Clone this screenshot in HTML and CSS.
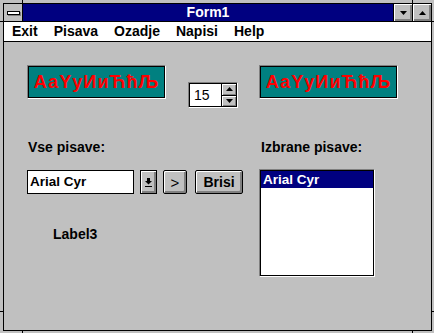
FILE: index.html
```html
<!DOCTYPE html>
<html>
<head>
<meta charset="utf-8">
<link rel="stylesheet" href="styles.css">
</head>
<body>
<div class="window">
  <div class="win">
    <div class="titlebar">
      <div class="sysbox"><span class="sysbar"></span></div>
      <div class="title">Form1</div>
      <div class="tbtn"><svg width="7" height="4" viewBox="0 0 7 4"><polygon points="0,0 7,0 3.5,4" fill="#000"/></svg></div>
      <div class="tbtn"><svg width="7" height="4" viewBox="0 0 7 4"><polygon points="0,4 7,4 3.5,0" fill="#000"/></svg></div>
    </div>
    <div class="menubar">
      <span class="mitem">Exit</span>
      <span class="mitem">Pisava</span>
      <span class="mitem">Ozadje</span>
      <span class="mitem">Napisi</span>
      <span class="mitem">Help</span>
    </div>
    <div class="client">
      <div class="col-left">
        <div class="row1">
          <div class="panel">АаYyИиЋћЉ</div>
          <div class="spin">
            <div class="spin-in">
              <div class="spin-edit">15</div>
              <div class="spin-btns">
                <div class="sbtn"><svg width="7" height="4" viewBox="0 0 7 4"><polygon points="0,4 7,4 3.5,0" fill="#000"/></svg></div>
                <div class="sbtn sbtn-low"><svg width="7" height="4" viewBox="0 0 7 4"><polygon points="0,0 7,0 3.5,4" fill="#000"/></svg></div>
              </div>
            </div>
          </div>
        </div>
        <div class="label lbl-left">Vse pisave:</div>
        <div class="combo-row">
          <div class="combo-edit">Arial Cyr</div>
          <div class="btn drop"><svg width="7" height="9" viewBox="0 0 7 9"><rect x="2" y="0" width="3" height="3" fill="#000"/><polygon points="0,3 7,3 3.5,6.5" fill="#000"/><rect x="0" y="8" width="7" height="1" fill="#000"/></svg></div>
          <div class="btn arrow">&gt;</div>
          <div class="btn brisi">Brisi</div>
        </div>
        <div class="label label3">Label3</div>
      </div>
      <div class="col-right">
        <div class="panel">АаYyИиЋћЉ</div>
        <div class="label lbl-right">Izbrane pisave:</div>
        <div class="listbox">
          <div class="litem sel">Arial Cyr</div>
        </div>
      </div>
    </div>
  </div>
  <span class="tick tv t-top1"></span>
  <span class="tick tv t-top2"></span>
  <span class="tick tv t-bot1"></span>
  <span class="tick tv t-bot2"></span>
  <span class="tick th t-l1"></span>
  <span class="tick th t-l2"></span>
  <span class="tick th t-r1"></span>
  <span class="tick th t-r2"></span>
</div>
</body>
</html>
```
FILE: styles.css
```css
* { box-sizing: border-box; }
body {
  margin: 0;
  background: #c0c0c0;
  font-family: "Liberation Sans", Arial, sans-serif;
  font-weight: bold;
  font-size: 14px;
  color: #000;
}
.window {
  position: relative;
  width: 434px;
  height: 333px;
  padding: 3px 2px 2px 3px;
  overflow: hidden;
}
.win {
  height: 100%;
  border: 1px solid #000;
  display: flex;
  flex-direction: column;
}
.titlebar {
  height: 18px;
  flex: none;
  display: flex;
  background: #000080;
  border-bottom: 1px solid #000;
}
.sysbox {
  width: 19px;
  background: #c0c0c0;
  border-right: 1px solid #000;
  display: flex;
  align-items: center;
  justify-content: center;
}
.sysbar {
  width: 13px;
  height: 4px;
  background: #fff;
  border: 1px solid #000;
  box-shadow: 1px 1px 0 #808080;
}
.title {
  flex: 1;
  color: #fff;
  text-align: center;
  line-height: 17px;
}
.tbtn {
  width: 19px;
  background: #c0c0c0;
  border-left: 1px solid #000;
  box-shadow: inset 1px 1px 0 #fff, inset -1px -1px 0 #808080, inset -2px -2px 0 #808080;
  display: flex;
  align-items: center;
  justify-content: center;
}
.menubar {
  height: 20px;
  flex: none;
  background: #fff;
  border-bottom: 1px solid #000;
  display: flex;
  line-height: 19px;
}
.mitem {
  padding: 0 8px;
}
.client {
  flex: 1;
  display: flex;
  padding: 23px 0 0 23px;
}
.col-left {
  width: 232px;
  display: flex;
  flex-direction: column;
  align-items: flex-start;
}
.col-right {
  display: flex;
  flex-direction: column;
  align-items: flex-start;
}
.row1 {
  display: flex;
  align-items: flex-start;
}
.panel {
  width: 139px;
  height: 34px;
  border: 1px solid;
  border-color: #808080 #fff #fff #808080;
  background: #008080;
  box-shadow: inset 0 0 0 1px #000;
  color: #ff0000;
  font-size: 18px;
  letter-spacing: 1.1px;
  display: flex;
  align-items: center;
  justify-content: center;
}
.spin {
  margin: 17px 0 0 22px;
  width: 50px;
  height: 26px;
  border: 1px solid;
  border-color: #808080 #fff #fff #808080;
  display: flex;
}
.spin-in {
  flex: 1;
  border: 1px solid #000;
  display: flex;
}
.spin-edit {
  flex: 1;
  background: #fff;
  padding-left: 4px;
  line-height: 22px;
  font-weight: normal;
  font-size: 14px;
}
.spin-btns {
  width: 15px;
  border-left: 1px solid #000;
  display: flex;
  flex-direction: column;
}
.sbtn {
  flex: 1;
  background: #c0c0c0;
  box-shadow: inset 1px 1px 0 #fff, inset -1px -1px 0 #808080;
  display: flex;
  align-items: center;
  justify-content: center;
}
.sbtn-low {
  border-top: 1px solid #000;
}
.label {
  line-height: 16px;
  padding-left: 1px;
}
.lbl-left {
  margin-top: 31px;
}
.lbl-right {
  margin-top: 40px;
  padding-left: 2px;
}
.combo-row {
  margin-top: 15px;
  display: flex;
  height: 24px;
}
.combo-edit {
  width: 107px;
  background: #fff;
  border: 1px solid #000;
  padding-left: 2px;
  line-height: 22px;
  font-size: 13.5px;
}
.btn {
  border: 1px solid #000;
  border-radius: 2px;
  background: #c0c0c0;
  box-shadow: inset 1px 1px 0 #fff, inset -1px -1px 0 #808080, inset -2px -2px 0 #808080;
  display: flex;
  align-items: center;
  justify-content: center;
}
.drop {
  width: 17px;
  margin-left: 6px;
  border-radius: 0;
}
.arrow {
  width: 24px;
  margin-left: 6px;
  font-weight: normal;
  font-size: 15px;
}
.brisi {
  width: 48px;
  margin-left: 8px;
}
.label3 {
  margin: 32px 0 0 25px;
}
.listbox {
  margin-top: 14px;
  width: 116px;
  height: 108px;
  border: 1px solid;
  border-color: #808080 #fff #fff #808080;
  background: #fff;
  box-shadow: inset 0 0 0 1px #000;
  padding: 1px;
}
.litem {
  height: 17px;
  line-height: 17px;
  padding-left: 2px;
  font-size: 13.5px;
}
.sel {
  background: #000080;
  color: #fff;
}
.tick {
  position: absolute;
  background: #000;
}
.tv { width: 1px; height: 3px; }
.th { width: 3px; height: 1px; }
.t-top1 { left: 22px; top: 0; }
.t-top2 { left: 412px; top: 0; }
.t-bot1 { left: 22px; bottom: 0; height: 2px; }
.t-bot2 { left: 412px; bottom: 0; height: 2px; }
.t-l1 { left: 0; top: 21px; }
.t-l2 { left: 0; top: 311px; }
.t-r1 { right: 0; top: 21px; width: 2px; }
.t-r2 { right: 0; top: 311px; width: 2px; }
```
